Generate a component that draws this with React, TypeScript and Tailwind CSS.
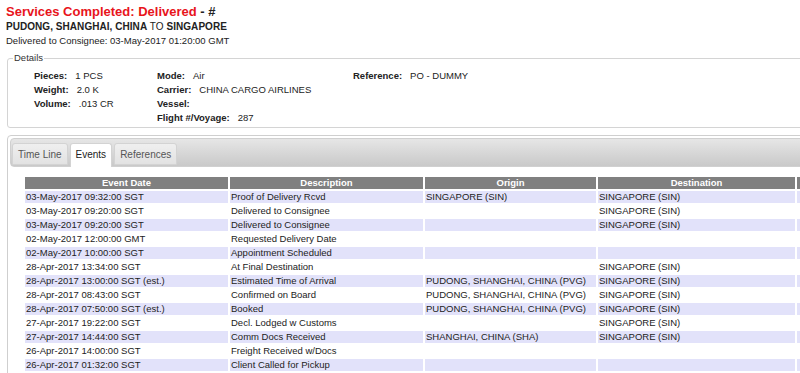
const events = [
  ['03-May-2017 09:32:00 SGT', 'Proof of Delivery Rcvd', 'SINGAPORE (SIN)', 'SINGAPORE (SIN)'],
  ['03-May-2017 09:20:00 SGT', 'Delivered to Consignee', '', 'SINGAPORE (SIN)'],
  ['03-May-2017 09:20:00 SGT', 'Delivered to Consignee', '', 'SINGAPORE (SIN)'],
  ['02-May-2017 12:00:00 GMT', 'Requested Delivery Date', '', ''],
  ['02-May-2017 10:00:00 SGT', 'Appointment Scheduled', '', ''],
  ['28-Apr-2017 13:34:00 SGT', 'At Final Destination', '', 'SINGAPORE (SIN)'],
  ['28-Apr-2017 13:00:00 SGT (est.)', 'Estimated Time of Arrival', 'PUDONG, SHANGHAI, CHINA (PVG)', 'SINGAPORE (SIN)'],
  ['28-Apr-2017 08:43:00 SGT', 'Confirmed on Board', 'PUDONG, SHANGHAI, CHINA (PVG)', 'SINGAPORE (SIN)'],
  ['28-Apr-2017 07:50:00 SGT (est.)', 'Booked', 'PUDONG, SHANGHAI, CHINA (PVG)', 'SINGAPORE (SIN)'],
  ['27-Apr-2017 19:22:00 SGT', 'Decl. Lodged w Customs', '', 'SINGAPORE (SIN)'],
  ['27-Apr-2017 14:44:00 SGT', 'Comm Docs Received', 'SHANGHAI, CHINA (SHA)', 'SINGAPORE (SIN)'],
  ['26-Apr-2017 14:00:00 SGT', 'Freight Received w/Docs', '', ''],
  ['26-Apr-2017 01:32:00 SGT', 'Client Called for Pickup', '', ''],
];

function Field({ label, value }: { label: string; value?: string }) {
  return (
    <div className="h-[14px] leading-[14px] whitespace-nowrap">
      <span className="font-bold">{label}</span>
      {value && <span className="ml-[8px]">{value}</span>}
    </div>
  );
}

export default function App() {
  const tabs = ['Time Line', 'Events', 'References'];

  return (
    <div className="w-[800px] h-[373px] overflow-hidden bg-white text-[#222] font-['Liberation_Sans',Arial,sans-serif] text-[9.5px]">
      {/* Header */}
      <div className="pl-[6px] pt-[3px]">
        <div className="text-[13px] font-bold leading-[17px]">
          <span className="text-[#e8141b]">Services Completed: Delivered</span>
          <span className="text-[#222]"> - #</span>
        </div>
        <div className="text-[10px] leading-[14px] tracking-[0.05px]">
          <span className="font-bold">PUDONG, SHANGHAI, CHINA</span> TO{' '}
          <span className="font-bold">SINGAPORE</span>
        </div>
        <div className="leading-[13px]">Delivered to Consignee: 03-May-2017 01:20:00 GMT</div>
      </div>

      {/* Details */}
      <fieldset className="ml-[7px] mt-[5px] w-[820px] h-[76px] border border-[#d4d4d4] rounded-[3px] pl-[26px] pt-[5px]">
        <legend className="-ml-[21px] px-[1px] leading-[12px] text-[#333]">Details</legend>
        <div className="flex">
          <div className="w-[123px]">
            <Field label="Pieces:" value="1 PCS" />
            <Field label="Weight:" value="2.0 K" />
            <Field label="Volume:" value=".013 CR" />
          </div>
          <div className="w-[196px]">
            <Field label="Mode:" value="Air" />
            <Field label="Carrier:" value="CHINA CARGO AIRLINES" />
            <Field label="Vessel:" />
            <Field label="Flight #/Voyage:" value="287" />
          </div>
          <div>
            <Field label="Reference:" value="PO - DUMMY" />
          </div>
        </div>
      </fieldset>

      {/* Tabs panel */}
      <div className="ml-[7px] mt-[7px] w-[830px] h-[260px] border border-[#cfcfcf] rounded-[4px] p-[2px]">
        <div className="h-[29px] rounded-[4px] border border-[#d0d0d0] bg-gradient-to-b from-[#e6e6e6] to-[#c9c9c9] flex items-end pl-[1px] gap-[2px]">
          {tabs.map(t =>
            t === 'Events' ? (
              <div
                key={t}
                className="h-[24px] -mb-[1px] px-[5px] leading-[22px] bg-white border border-[#d3d3d3] border-b-0 rounded-t-[3px] text-[10px] text-[#222]"
              >
                {t}
              </div>
            ) : (
              <div
                key={t}
                className="h-[22px] mb-[1px] px-[5px] leading-[21px] bg-gradient-to-b from-[#efefef] to-[#e2e2e2] border border-[#d3d3d3] rounded-t-[3px] text-[10px] text-[#555]"
              >
                {t}
              </div>
            )
          )}
        </div>

        <table className="table-fixed w-[836px] ml-[13px] mt-[8px] border-separate border-spacing-[2px]">
          <colgroup>
            <col className="w-[203px]" />
            <col className="w-[193px]" />
            <col className="w-[171px]" />
            <col className="w-[197px]" />
            <col className="w-[60px]" />
          </colgroup>
          <thead>
            <tr className="bg-[#808080] text-white font-bold">
              <th className="h-[12px] leading-[12px] p-0 text-center">Event Date</th>
              <th className="h-[12px] leading-[12px] p-0 text-center">Description</th>
              <th className="h-[12px] leading-[12px] p-0 text-center">Origin</th>
              <th className="h-[12px] leading-[12px] p-0 text-center">Destination</th>
              <th className="h-[12px] leading-[12px] p-0"></th>
            </tr>
          </thead>
          <tbody>
            {events.map((r, i) => (
              <tr key={i} className={i % 2 === 0 ? 'bg-[#e2e2fa]' : 'bg-white'}>
                {r.map((c, j) => (
                  <td key={j} className="h-[12px] leading-[12px] p-0 pl-[1px] whitespace-nowrap overflow-hidden">
                    {c}
                  </td>
                ))}
                <td className="p-0"></td>
              </tr>
            ))}
          </tbody>
        </table>
      </div>
    </div>
  );
}
